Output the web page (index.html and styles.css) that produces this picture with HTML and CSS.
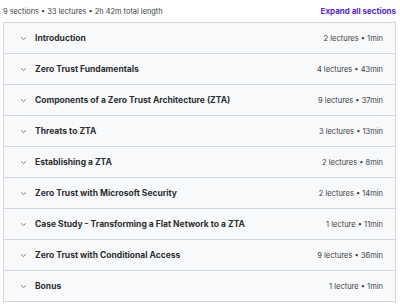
FILE: index.html
```html
<!DOCTYPE html>
<html lang="en">
<head>
    <meta charset="UTF-8">
    <title>Course content</title>
    <link rel="stylesheet" href="styles.css">
</head>
<body>
    <div class="content-header">
        <span class="summary">9 sections • 33 lectures • 2h 42m total length</span>
        <a class="expand-all" href="#">Expand all sections</a>
    </div>
    <div class="sections">
        <div class="section">
            <span class="chevron"><svg width="7" height="5" viewBox="0 0 7 5"><path d="M1.2 1.4 3.5 3.6 5.8 1.4" fill="none" stroke="#6a6f73" stroke-width="0.9"/></svg></span>
            <span class="title">Introduction</span>
            <span class="meta">2 lectures • 1min</span>
        </div>
        <div class="section">
            <span class="chevron"><svg width="7" height="5" viewBox="0 0 7 5"><path d="M1.2 1.4 3.5 3.6 5.8 1.4" fill="none" stroke="#6a6f73" stroke-width="0.9"/></svg></span>
            <span class="title">Zero Trust Fundamentals</span>
            <span class="meta">4 lectures • 43min</span>
        </div>
        <div class="section">
            <span class="chevron"><svg width="7" height="5" viewBox="0 0 7 5"><path d="M1.2 1.4 3.5 3.6 5.8 1.4" fill="none" stroke="#6a6f73" stroke-width="0.9"/></svg></span>
            <span class="title">Components of a Zero Trust Architecture (ZTA)</span>
            <span class="meta">9 lectures • 37min</span>
        </div>
        <div class="section">
            <span class="chevron"><svg width="7" height="5" viewBox="0 0 7 5"><path d="M1.2 1.4 3.5 3.6 5.8 1.4" fill="none" stroke="#6a6f73" stroke-width="0.9"/></svg></span>
            <span class="title">Threats to ZTA</span>
            <span class="meta">3 lectures • 13min</span>
        </div>
        <div class="section">
            <span class="chevron"><svg width="7" height="5" viewBox="0 0 7 5"><path d="M1.2 1.4 3.5 3.6 5.8 1.4" fill="none" stroke="#6a6f73" stroke-width="0.9"/></svg></span>
            <span class="title">Establishing a ZTA</span>
            <span class="meta">2 lectures • 8min</span>
        </div>
        <div class="section">
            <span class="chevron"><svg width="7" height="5" viewBox="0 0 7 5"><path d="M1.2 1.4 3.5 3.6 5.8 1.4" fill="none" stroke="#6a6f73" stroke-width="0.9"/></svg></span>
            <span class="title">Zero Trust with Microsoft Security</span>
            <span class="meta">2 lectures • 14min</span>
        </div>
        <div class="section">
            <span class="chevron"><svg width="7" height="5" viewBox="0 0 7 5"><path d="M1.2 1.4 3.5 3.6 5.8 1.4" fill="none" stroke="#6a6f73" stroke-width="0.9"/></svg></span>
            <span class="title">Case Study - Transforming a Flat Network to a ZTA</span>
            <span class="meta">1 lecture • 11min</span>
        </div>
        <div class="section">
            <span class="chevron"><svg width="7" height="5" viewBox="0 0 7 5"><path d="M1.2 1.4 3.5 3.6 5.8 1.4" fill="none" stroke="#6a6f73" stroke-width="0.9"/></svg></span>
            <span class="title">Zero Trust with Conditional Access</span>
            <span class="meta">9 lectures • 36min</span>
        </div>
        <div class="section">
            <span class="chevron"><svg width="7" height="5" viewBox="0 0 7 5"><path d="M1.2 1.4 3.5 3.6 5.8 1.4" fill="none" stroke="#6a6f73" stroke-width="0.9"/></svg></span>
            <span class="title">Bonus</span>
            <span class="meta">1 lecture • 1min</span>
        </div>
    </div>
</body>
</html>
```

FILE: styles.css
```css
body {
    margin: 0;
    padding: 0 4px 0 3px;
    font-family: 'Inter', 'Noto Sans', sans-serif;
    background-color: #ffffff;
    color: #2d2f31;
}
.content-header {
    display: flex;
    justify-content: space-between;
    align-items: center;
    height: 22px;
}
.summary {
    font-size: 7.4px;
    color: #3e4143;
}
.expand-all {
    font-size: 8px;
    font-weight: 700;
    color: #5624d0;
    text-decoration: none;
}
.sections {
    border: 1px solid #d1d7dc;
    border-bottom: none;
}
.section {
    display: flex;
    align-items: center;
    height: 30px;
    padding: 0 12px 0 16px;
    background-color: #f7f9fa;
    border-bottom: 1px solid #d1d7dc;
}
.chevron {
    display: flex;
    width: 7px;
    margin-right: 8px;
}
.title {
    flex: 1;
    font-size: 8.5px;
    font-weight: 700;
}
.meta {
    font-size: 7.5px;
    color: #3e4143;
}
```
